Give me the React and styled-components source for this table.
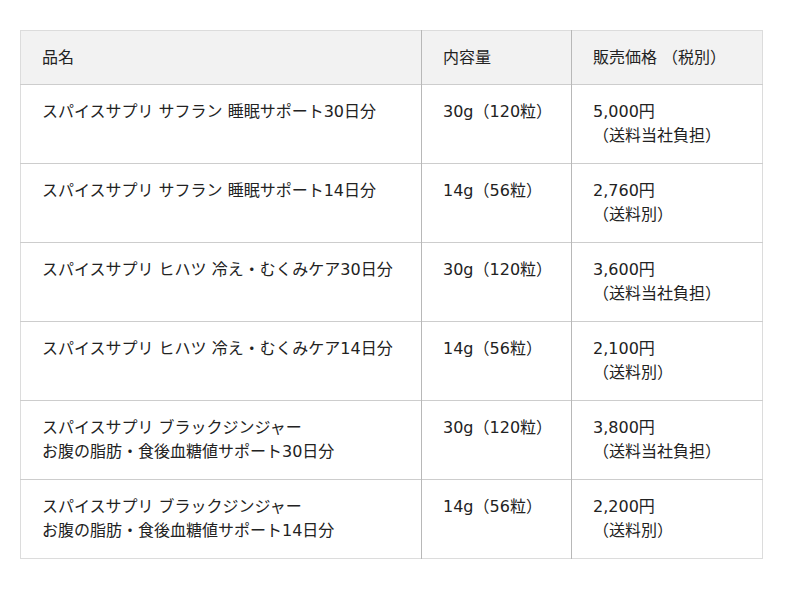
import React from "react";
import styled, { createGlobalStyle } from "styled-components";

const Global = createGlobalStyle`
  html, body { margin: 0; padding: 0; background: #fff; }
  body { font-family: "DejaVu Sans", "Noto Sans CJK JP", sans-serif; color: #222; }
`;

const Page = styled.div`
  padding: 30px 0 0 20px;
`;

const Table = styled.table`
  width: 742px;
  border-collapse: collapse;
  table-layout: fixed;
  font-size: 16px;
  line-height: 24px;
  border: 1px solid #dcdcdc;
`;

const Row = styled.tr`
  border-bottom: 1px solid ${(p) => (p.$last ? "#dcdcdc" : "#cdcdcd")};
`;

const Cell = styled.td`
  padding: ${(p) => (p.$head ? "15px 21px 14px" : "15px 21px")};
  vertical-align: top;
  text-align: left;
  font-weight: normal;
  background: ${(p) => (p.$head ? "#f2f2f2" : "#fff")};
  border-left: 1px solid #b8b8b8;
  &:first-child { border-left: none; }
`;

const Line = styled.span`
  display: block;
  white-space: nowrap;
`;

const rows = [
  [["スパイスサプリ サフラン 睡眠サポート30日分"], "30g（120粒）", "5,000円", "（送料当社負担）"],
  [["スパイスサプリ サフラン 睡眠サポート14日分"], "14g（56粒）", "2,760円", "（送料別）"],
  [["スパイスサプリ ヒハツ 冷え・むくみケア30日分"], "30g（120粒）", "3,600円", "（送料当社負担）"],
  [["スパイスサプリ ヒハツ 冷え・むくみケア14日分"], "14g（56粒）", "2,100円", "（送料別）"],
  [["スパイスサプリ ブラックジンジャー", "お腹の脂肪・食後血糖値サポート30日分"], "30g（120粒）", "3,800円", "（送料当社負担）"],
  [["スパイスサプリ ブラックジンジャー", "お腹の脂肪・食後血糖値サポート14日分"], "14g（56粒）", "2,200円", "（送料別）"],
];

export default function App() {
  return (
    <Page>
      <Global />
      <Table>
        <colgroup>
          <col style={{ width: 401 }} />
          <col style={{ width: 150 }} />
          <col style={{ width: 191 }} />
        </colgroup>
        <thead>
          <Row>
            <Cell as="th" $head>品名</Cell>
            <Cell as="th" $head>内容量</Cell>
            <Cell as="th" $head>販売価格 （税別）</Cell>
          </Row>
        </thead>
        <tbody>
          {rows.map((r, i) => (
            <Row key={i} $last={i === rows.length - 1}>
              <Cell>
                {r[0].map((l, j) => (
                  <Line key={j}>{l}</Line>
                ))}
              </Cell>
              <Cell>{r[1]}</Cell>
              <Cell>
                <Line>{r[2]}</Line>
                <Line>{r[3]}</Line>
              </Cell>
            </Row>
          ))}
        </tbody>
      </Table>
    </Page>
  );
}
